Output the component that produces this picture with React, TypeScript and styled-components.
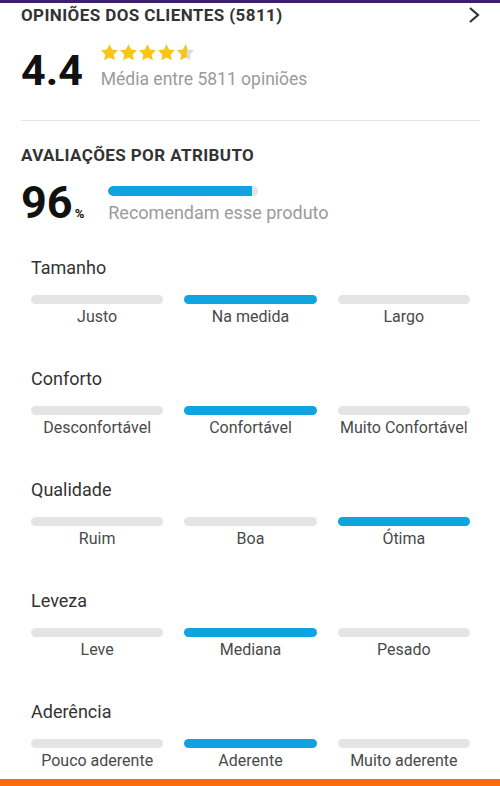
import React from "react";
import styled, { createGlobalStyle } from "styled-components";

const colors = {
  text: "#333333",
  label: "#4a4a4a",
  muted: "#9b9b9b",
  blue: "#0fa3df",
  track: "#e4e4e4",
  star: "#f9c51b",
  purple: "#3e1f6a",
  orange: "#ff6a0d",
};

const GlobalStyle = createGlobalStyle`
  html, body {
    margin: 0;
    padding: 0;
    background: #fff;
  }
  body {
    font-family: Roboto, "Noto Sans", "Liberation Sans", sans-serif;
  }
`;

const Page = styled.div`
  width: 500px;
  height: 786px;
  overflow: hidden;
  display: flex;
  flex-direction: column;
  background: #fff;
`;

const TopStrip = styled.div`
  height: 3px;
  flex-shrink: 0;
  background: ${colors.purple};
`;

const BottomStrip = styled.div`
  height: 7px;
  flex-shrink: 0;
  margin-top: auto;
  background: ${colors.orange};
`;

const Content = styled.div`
  padding: 0 20px 0 21px;
`;

const Header = styled.div`
  display: flex;
  align-items: center;
  justify-content: space-between;
  margin-top: 2px;
`;

const SectionTitle = styled.h2<{ $top?: number }>`
  margin: ${(p) => p.$top ?? 0}px 0 0;
  font-size: 17px;
  line-height: 20px;
  font-weight: 700;
  letter-spacing: 0.4px;
  color: ${colors.text};
`;

const Chevron = styled.svg`
  width: 12px;
  height: 18px;
  flex-shrink: 0;
`;

const SummaryRow = styled.div<{ $top: number }>`
  display: flex;
  align-items: flex-start;
  margin-top: ${(p) => p.$top}px;
`;

const BigNumber = styled.div<{ $size: number; $offset: number }>`
  font-size: ${(p) => p.$size}px;
  line-height: ${(p) => p.$size}px;
  font-weight: 700;
  color: #111;
  margin-top: ${(p) => p.$offset}px;

  small {
    font-size: 13px;
    line-height: 0;
    margin-left: 2px;
  }
`;

const SummaryInfo = styled.div<{ $left: number }>`
  display: flex;
  flex-direction: column;
  align-items: flex-start;
  margin-left: ${(p) => p.$left}px;
`;

const Stars = styled.div`
  display: flex;
  gap: 2px;
`;

const MutedText = styled.div<{ $top: number; $size: number }>`
  margin-top: ${(p) => p.$top}px;
  font-size: ${(p) => p.$size}px;
  line-height: 20px;
  color: ${colors.muted};
`;

const RecommendTrack = styled.div`
  width: 150px;
  height: 10px;
  margin-top: 6px;
  border-radius: 5px;
  background: ${colors.track};
  overflow: hidden;
`;

const RecommendFill = styled.div`
  height: 100%;
  border-radius: 5px 0 0 5px;
  background: ${colors.blue};
`;

const Divider = styled.hr`
  margin: 28px 0 0;
  border: 0;
  height: 1px;
  background: #e6e6e6;
`;

const Attributes = styled.div`
  padding: 0 10px;
  margin-top: 32px;
  display: flex;
  flex-direction: column;
  gap: 41px;
`;

const Attribute = styled.div``;

const AttributeName = styled.div`
  font-size: 18px;
  line-height: 22px;
  color: ${colors.text};
`;

const Options = styled.div`
  display: grid;
  grid-template-columns: repeat(3, 1fr);
  column-gap: 21px;
  margin-top: 16px;
`;

const Option = styled.div`
  display: flex;
  flex-direction: column;
  align-items: center;
`;

const OptionBar = styled.div<{ $active?: boolean }>`
  width: 100%;
  height: 9px;
  border-radius: 5px;
  background: ${(p) => (p.$active ? colors.blue : colors.track)};
`;

const OptionLabel = styled.div`
  margin-top: 3px;
  font-size: 16px;
  line-height: 20px;
  color: ${colors.label};
  white-space: nowrap;
`;

const STAR =
  "M12 2l3.09 6.26L22 9.27l-5 4.87 1.18 6.88L12 17.77l-6.18 3.25L7 14.14 2 9.27l6.91-1.01L12 2z";

const Star = ({ fill, id }: { fill: number; id: string }) => (
  <svg width="17" height="16.5" viewBox="2 2 20 19.1">
    <defs>
      <linearGradient id={id} x1="0" x2="1" y1="0" y2="0">
        <stop offset={fill} stopColor={colors.star} />
        <stop offset={fill} stopColor="#dcdcdc" />
      </linearGradient>
    </defs>
    <path d={STAR} fill={`url(#${id})`} />
  </svg>
);

const attributes = [
  { name: "Tamanho", options: ["Justo", "Na medida", "Largo"], active: 1 },
  {
    name: "Conforto",
    options: ["Desconfortável", "Confortável", "Muito Confortável"],
    active: 1,
  },
  { name: "Qualidade", options: ["Ruim", "Boa", "Ótima"], active: 2 },
  { name: "Leveza", options: ["Leve", "Mediana", "Pesado"], active: 1 },
  {
    name: "Aderência",
    options: ["Pouco aderente", "Aderente", "Muito aderente"],
    active: 1,
  },
];

// the last star is drawn a bit fuller than 0.4 to match the app's rendering
const starFills = [1, 1, 1, 1, 0.6];
const recommend = 96;

export default function App() {
  return (
    <Page>
      <GlobalStyle />
      <TopStrip />
      <Content>
        <Header>
          <SectionTitle>OPINIÕES DOS CLIENTES (5811)</SectionTitle>
          <Chevron viewBox="0 0 12 18">
            <polyline
              points="2,2 10,9 2,16"
              fill="none"
              stroke="#333"
              strokeWidth="2.2"
            />
          </Chevron>
        </Header>

        <SummaryRow $top={19}>
          <BigNumber $size={43} $offset={5}>
            4.4
          </BigNumber>
          <SummaryInfo $left={18}>
            <Stars>
              {starFills.map((f, i) => (
                <Star key={i} fill={f} id={`star-${i}`} />
              ))}
            </Stars>
            <MutedText $top={8} $size={17.5}>
              Média entre 5811 opiniões
            </MutedText>
          </SummaryInfo>
        </SummaryRow>

        <Divider />

        <SectionTitle $top={24}>AVALIAÇÕES POR ATRIBUTO</SectionTitle>

        <SummaryRow $top={15}>
          <BigNumber $size={45} $offset={0}>
            96<small>%</small>
          </BigNumber>
          <SummaryInfo $left={24}>
            <RecommendTrack>
              <RecommendFill style={{ width: `${recommend}%` }} />
            </RecommendTrack>
            <MutedText $top={7} $size={18}>
              Recomendam esse produto
            </MutedText>
          </SummaryInfo>
        </SummaryRow>
      </Content>

      <Content>
        <Attributes>
          {attributes.map((a) => (
            <Attribute key={a.name}>
              <AttributeName>{a.name}</AttributeName>
              <Options>
                {a.options.map((o, i) => (
                  <Option key={o}>
                    <OptionBar $active={i === a.active} />
                    <OptionLabel>{o}</OptionLabel>
                  </Option>
                ))}
              </Options>
            </Attribute>
          ))}
        </Attributes>
      </Content>
      <BottomStrip />
    </Page>
  );
}
